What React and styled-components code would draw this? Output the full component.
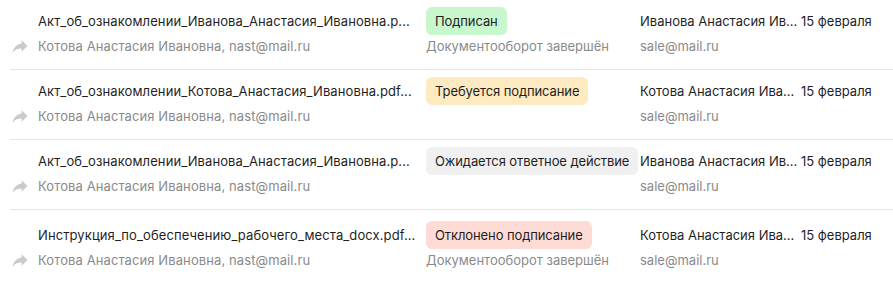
import React from "react";
import styled, { createGlobalStyle } from "styled-components";

const GlobalStyle = createGlobalStyle`
  body {
    margin: 0;
    background: #fff;
    font-family: Inter, "Noto Sans", sans-serif;
    font-size: 13px;
    color: #1f1f1f;
  }
`;

const List = styled.div`
  display: flex;
  flex-direction: column;
  padding-left: 10px;
`;

const Row = styled.div`
  display: grid;
  grid-template-columns: 28px 388px 214px 161px 1fr;
  grid-template-rows: 28px 22px;
  align-items: center;
  padding: ${p => (p.$shift ? "11px 0 9px" : "7px 0 12px")};
  border-bottom: 1px solid #e6e6e6;

  &:last-child {
    border-bottom: none;
  }
`;

const Title = styled.div`
  grid-column: 2;
  grid-row: 1;
  padding-right: 8px;
  white-space: nowrap;
  color: #1f1f1f;
  letter-spacing: 0.1px;
`;

const IconCell = styled.div`
  grid-column: 1;
  grid-row: 2;
  display: flex;
  align-items: center;
  color: #cacaca;
`;

const Sender = styled.div`
  grid-column: 2;
  grid-row: 2;
  color: #8a8a8a;
  white-space: nowrap;
  letter-spacing: 0.1px;
`;

const StatusCell = styled.div`
  grid-column: 3;
  grid-row: 1;
  display: flex;
`;

const Badge = styled.span`
  display: inline-flex;
  align-items: center;
  height: 28px;
  padding: 0 9px;
  border-radius: 6px;
  background: ${p => p.$bg};
  color: #1f1f1f;
  white-space: nowrap;
  letter-spacing: -0.1px;
`;

const StatusNote = styled.div`
  grid-column: 3;
  grid-row: 2;
  color: #8a8a8a;
  white-space: nowrap;
`;

const Name = styled.div`
  grid-column: 4;
  grid-row: 1;
  white-space: nowrap;
`;

const Email = styled.div`
  grid-column: 4;
  grid-row: 2;
  color: #8a8a8a;
`;

const DateCell = styled.div`
  grid-column: 5;
  grid-row: 1;
  white-space: nowrap;
`;

const ForwardIcon = () => (
  <svg width="20" height="20" viewBox="0 0 24 24" fill="currentColor">
    <path
      transform="translate(24 0) scale(-1 1)"
      d="M10 9V5l-7 7 7 7v-4.1c5 0 8.5 1.6 11 5.1-1-5-4-10-11-11z"
    />
  </svg>
);

const STATUS = {
  signed: { label: "Подписан", bg: "#c8f7cd" },
  required: { label: "Требуется подписание", bg: "#feeac0" },
  waiting: { label: "Ожидается ответное действие", bg: "#f0f0f0" },
  rejected: { label: "Отклонено подписание", bg: "#fedcd5" },
};

const docs = [
  {
    id: 1,
    file: "Акт_об_ознакомлении_Иванова_Анастасия_Ивановна.p...",
    status: "signed",
    note: "Документооборот завершён",
    name: "Иванова Анастасия Ив...",
  },
  {
    id: 2,
    file: "Акт_об_ознакомлении_Котова_Анастасия_Ивановна.pdf...",
    status: "required",
    name: "Котова Анастасия Ива...",
  },
  {
    id: 3,
    file: "Акт_об_ознакомлении_Иванова_Анастасия_Ивановна.p...",
    status: "waiting",
    name: "Иванова Анастасия Ив...",
  },
  {
    id: 4,
    file: "Инструкция_по_обеспечению_рабочего_места_docx.pdf...",
    status: "rejected",
    note: "Документооборот завершён",
    name: "Котова Анастасия Ива...",
    shift: true,
  },
];

const App = () => {
  return (
    <>
      <GlobalStyle />
      <List>
        {docs.map(d => {
          const st = STATUS[d.status];
          return (
            <Row key={d.id} $shift={d.shift}>
              <Title>{d.file}</Title>
              <IconCell>
                <ForwardIcon />
              </IconCell>
              <Sender>Котова Анастасия Ивановна, nast@mail.ru</Sender>
              <StatusCell>
                <Badge $bg={st.bg}>{st.label}</Badge>
              </StatusCell>
              {d.note ? <StatusNote>{d.note}</StatusNote> : null}
              <Name>{d.name}</Name>
              <Email>sale@mail.ru</Email>
              <DateCell>15 февраля</DateCell>
            </Row>
          );
        })}
      </List>
    </>
  );
};

export default App;
